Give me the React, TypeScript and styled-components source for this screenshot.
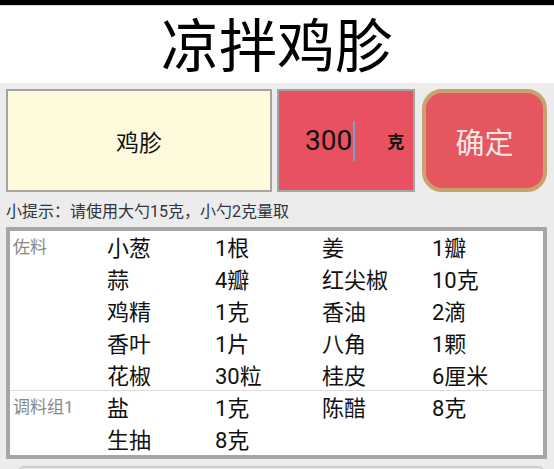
import * as React from 'react'
import styled, { createGlobalStyle } from 'styled-components'

const GlobalStyle = createGlobalStyle`
  html, body {
    margin: 0;
    padding: 0;
    background: #ececec;
    font-family: Roboto, "Noto Sans CJK SC", "Noto Sans", sans-serif;
    overflow: hidden;
  }
`

const Page = styled.div`
  width: 554px;
  height: 469px;
  display: flex;
  flex-direction: column;
  background: #ececec;
  border-top: 5px solid #000;
  box-sizing: border-box;
  overflow: hidden;

  & > * {
    flex-shrink: 0;
  }
`

const Header = styled.h1`
  margin: 0;
  height: 78px;
  box-sizing: border-box;
  padding-top: 5px;
  background: #fff;
  border-top: 1px solid #d8d8d8;
  display: flex;
  align-items: center;
  justify-content: center;
  font-size: 58px;
  font-weight: 400;
  color: #000;
  line-height: 1;
`

const Controls = styled.div`
  display: flex;
  padding: 6px 7px 0 6px;
  height: 103px;
  gap: 5px;
`

const NameBox = styled.div`
  width: 266px;
  box-sizing: border-box;
  border: 2px solid #a4a4a4;
  background: #fffadc;
  display: flex;
  align-items: center;
  justify-content: center;
  font-size: 23px;
  color: #111;
`

const AmountBox = styled.div`
  width: 138px;
  box-sizing: border-box;
  border: 2px solid #a4a4a4;
  background: #e8515f;
  display: flex;
  align-items: center;
  padding-left: 26px;
  margin-right: 2px;
`

const AmountValue = styled.span`
  font-family: Roboto, sans-serif;
  font-size: 28px;
  color: #111;
  display: flex;
  align-items: center;
`

const Caret = styled.span`
  width: 2px;
  height: 40px;
  background: #6fa3d2;
  margin-left: 1px;
`

const Unit = styled.span`
  font-size: 17px;
  font-weight: 700;
  color: #111;
  margin-left: 32px;
`

const ConfirmButton = styled.button`
  flex: 1;
  box-sizing: border-box;
  border: 4px solid #c9a070;
  border-radius: 20px;
  background: #e5565e;
  color: #f5e6e6;
  font-family: "Noto Sans CJK SC", sans-serif;
  font-size: 29px;
  padding: 0;
`

const Hint = styled.div`
  padding: 8px 6px 4px;
  font-size: 16px;
  line-height: 23px;
  color: #2f3440;
`

const Table = styled.div`
  margin: 0 7px 0 6px;
  border: 4px solid #a6a6a6;
  background: #fff;
  display: flex;
  flex-direction: column;
`

const Group = styled.div<{ $divider?: boolean }>`
  display: flex;
  border-top: ${p => (p.$divider ? '1px solid #dcdcdc' : 'none')};
`

const GroupLabel = styled.div`
  width: 94px;
  padding: 5px 0 0 3px;
  font-size: 17px;
  line-height: 22px;
  color: #888;
`

const Items = styled.div`
  flex: 1;
  display: grid;
  grid-template-columns: 108px 107px 110px 1fr;
  grid-auto-rows: 31.8px;
  align-items: center;
`

const Cell = styled.div`
  font-size: 22px;
  line-height: 26px;
  color: #111;
  padding-top: 5px;
  white-space: nowrap;
`

const NextCard = styled.div`
  margin: 7px 10px 0 18px;
  height: 20px;
  border: 2px solid #cfcfcf;
  border-radius: 6px;
  background: #ececec;
`

const groups = [
  {
    label: '佐料',
    items: [
      ['小葱', '1根'],
      ['姜', '1瓣'],
      ['蒜', '4瓣'],
      ['红尖椒', '10克'],
      ['鸡精', '1克'],
      ['香油', '2滴'],
      ['香叶', '1片'],
      ['八角', '1颗'],
      ['花椒', '30粒'],
      ['桂皮', '6厘米'],
    ],
  },
  {
    label: '调料组1',
    items: [
      ['盐', '1克'],
      ['陈醋', '8克'],
      ['生抽', '8克'],
    ],
  },
]

export default function App() {
  return (
    <Page>
      <GlobalStyle />
      <Header>凉拌鸡胗</Header>
      <Controls>
        <NameBox>鸡胗</NameBox>
        <AmountBox>
          <AmountValue>
            300
            <Caret />
          </AmountValue>
          <Unit>克</Unit>
        </AmountBox>
        <ConfirmButton>确定</ConfirmButton>
      </Controls>
      <Hint>小提示：请使用大勺15克，小勺2克量取</Hint>
      <Table>
        {groups.map((group, i) => (
          <Group key={group.label} $divider={i > 0}>
            <GroupLabel>{group.label}</GroupLabel>
            <Items>
              {group.items.flatMap(([name, amount]) => [
                <Cell key={name}>{name}</Cell>,
                <Cell key={name + amount}>{amount}</Cell>,
              ])}
            </Items>
          </Group>
        ))}
      </Table>
      <NextCard />
    </Page>
  )
}
